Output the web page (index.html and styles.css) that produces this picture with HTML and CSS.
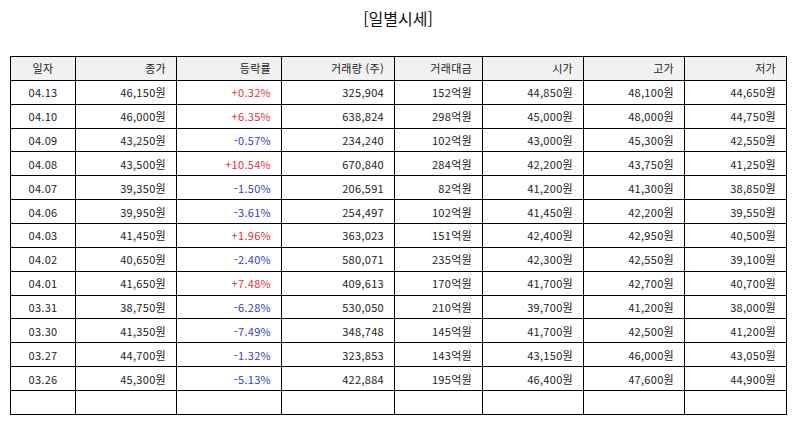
FILE: index.html
```html
<!DOCTYPE html>
<html lang="ko">
<head>
<meta charset="utf-8">
<title>일별시세</title>
<link rel="stylesheet" href="styles.css">
</head>
<body>
<div class="page">
  <h1 class="title">[일별시세]</h1>
  <table class="grid">
    <colgroup>
      <col class="c1"><col class="c2"><col class="c3"><col class="c4"><col class="c5"><col class="c6"><col class="c7"><col class="c8">
    </colgroup>
    <thead>
      <tr><th class="ctr">일자</th><th>종가</th><th>등락률</th><th>거래량 (주)</th><th>거래대금</th><th>시가</th><th>고가</th><th>저가</th></tr>
    </thead>
    <tbody>
      <tr><td class="ctr">04.13</td><td>46,150원</td><td class="up">+0.32%</td><td>325,904</td><td>152억원</td><td>44,850원</td><td>48,100원</td><td>44,650원</td></tr>
      <tr><td class="ctr">04.10</td><td>46,000원</td><td class="up">+6.35%</td><td>638,824</td><td>298억원</td><td>45,000원</td><td>48,000원</td><td>44,750원</td></tr>
      <tr><td class="ctr">04.09</td><td>43,250원</td><td class="down">-0.57%</td><td>234,240</td><td>102억원</td><td>43,000원</td><td>45,300원</td><td>42,550원</td></tr>
      <tr><td class="ctr">04.08</td><td>43,500원</td><td class="up">+10.54%</td><td>670,840</td><td>284억원</td><td>42,200원</td><td>43,750원</td><td>41,250원</td></tr>
      <tr><td class="ctr">04.07</td><td>39,350원</td><td class="down">-1.50%</td><td>206,591</td><td>82억원</td><td>41,200원</td><td>41,300원</td><td>38,850원</td></tr>
      <tr><td class="ctr">04.06</td><td>39,950원</td><td class="down">-3.61%</td><td>254,497</td><td>102억원</td><td>41,450원</td><td>42,200원</td><td>39,550원</td></tr>
      <tr><td class="ctr">04.03</td><td>41,450원</td><td class="up">+1.96%</td><td>363,023</td><td>151억원</td><td>42,400원</td><td>42,950원</td><td>40,500원</td></tr>
      <tr><td class="ctr">04.02</td><td>40,650원</td><td class="down">-2.40%</td><td>580,071</td><td>235억원</td><td>42,300원</td><td>42,550원</td><td>39,100원</td></tr>
      <tr><td class="ctr">04.01</td><td>41,650원</td><td class="up">+7.48%</td><td>409,613</td><td>170억원</td><td>41,700원</td><td>42,700원</td><td>40,700원</td></tr>
      <tr><td class="ctr">03.31</td><td>38,750원</td><td class="down">-6.28%</td><td>530,050</td><td>210억원</td><td>39,700원</td><td>41,200원</td><td>38,000원</td></tr>
      <tr><td class="ctr">03.30</td><td>41,350원</td><td class="down">-7.49%</td><td>348,748</td><td>145억원</td><td>41,700원</td><td>42,500원</td><td>41,200원</td></tr>
      <tr><td class="ctr">03.27</td><td>44,700원</td><td class="down">-1.32%</td><td>323,853</td><td>143억원</td><td>43,150원</td><td>46,000원</td><td>43,050원</td></tr>
      <tr><td class="ctr">03.26</td><td>45,300원</td><td class="down">-5.13%</td><td>422,884</td><td>195억원</td><td>46,400원</td><td>47,600원</td><td>44,900원</td></tr>
      <tr><td></td><td></td><td></td><td></td><td></td><td></td><td></td><td></td></tr>
    </tbody>
  </table>
</div>
</body>
</html>
```

FILE: styles.css
```css
html, body {
  margin: 0;
  padding: 0;
  background: #ffffff;
}

.page {
  padding: 0 9px 0 10px;
  font-family: "Noto Sans CJK KR", "Noto Sans", sans-serif;
  color: #222222;
}

.title {
  margin: 0;
  padding-top: 7px;
  height: 56px;
  box-sizing: border-box;
  text-align: center;
  font-size: 16px;
  font-weight: normal;
  line-height: 22px;
  color: #111111;
}

.grid {
  width: 776px;
  border-collapse: collapse;
  table-layout: fixed;
  font-size: 11px;
  letter-spacing: 0.3px;
}

.c1 { width: 65px; }
.c2 { width: 101px; }
.c3 { width: 105px; }
.c4 { width: 113px; }
.c5 { width: 88px; }
.c6 { width: 101px; }
.c7 { width: 101px; }
.c8 { width: 102px; }

.grid th,
.grid td {
  border: 1px solid #000000;
  height: 23.87px;
  padding: 0 10px 0 4px;
  text-align: right;
  font-weight: normal;
  line-height: 14px;
  white-space: nowrap;
  box-sizing: border-box;
}

.grid th {
  background: #f1f1f1;
  color: #222222;
}

.grid .ctr {
  text-align: center;
  padding: 0 4px;
}

.grid .up { color: #e0303c; }
.grid .down { color: #3a3acb; }
```
